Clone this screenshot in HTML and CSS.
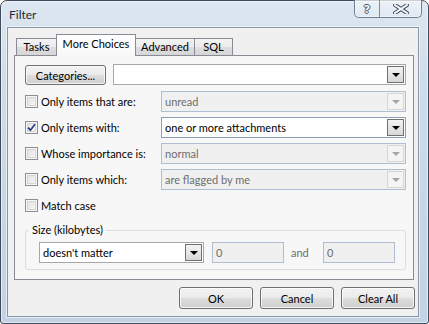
FILE: index.html
```html
<!DOCTYPE html>
<html>
<head>
<meta charset="utf-8">
<title>Filter</title>
<link rel="stylesheet" href="styles.css">
</head>
<body>
<div class="window">
  <div class="titlebar">
    <span class="title">Filter</span>
    <div class="caption-btns">
      <div class="cbtn help">?</div>
      <div class="cbtn close">
        <svg width="16" height="10" viewBox="0 0 16 10">
          <path d="M2 1 L14 9 M14 1 L2 9" stroke="#4b5566" stroke-width="4" stroke-linecap="square"/>
          <path d="M2 1 L14 9 M14 1 L2 9" stroke="#f4f7fa" stroke-width="2" stroke-linecap="square"/>
        </svg>
      </div>
    </div>
  </div>
  <div class="client">
    <div class="tabs">
      <div class="tab t-tasks">Tasks</div>
      <div class="tab t-more active">More Choices</div>
      <div class="tab t-adv">Advanced</div>
      <div class="tab t-sql">SQL</div>
    </div>
    <div class="panel">
      <div class="cat-row">
        <div class="btn cat">Categories...</div>
        <div class="combo wide"><span class="val"></span><span class="arrow"><i></i></span></div>
      </div>
      <div class="crit">
        <div class="chk"><span class="box"></span>Only items that are:</div>
        <div class="combo disabled"><span class="val">unread</span><span class="arrow"><i></i></span></div>
        <div class="chk"><span class="box checked"><svg width="9" height="9" viewBox="0 0 9 9"><path d="M1 4.6 L3.4 7.2 L8 1.2" fill="none" stroke="#2b3c8c" stroke-width="1.7"/></svg></span>Only items with:</div>
        <div class="combo active-list"><span class="val">one or more attachments</span><span class="arrow"><i></i></span></div>
        <div class="chk"><span class="box"></span>Whose importance is:</div>
        <div class="combo disabled"><span class="val">normal</span><span class="arrow"><i></i></span></div>
        <div class="chk"><span class="box"></span>Only items which:</div>
        <div class="combo disabled"><span class="val">are flagged by me</span><span class="arrow"><i></i></span></div>
      </div>
      <div class="chk match"><span class="box"></span>Match case</div>
      <fieldset class="group">
        <legend>Size (kilobytes)</legend>
        <div class="size-row">
          <div class="combo size"><span class="val">doesn't matter</span><span class="arrow"><i></i></span></div>
          <div class="field">0</div>
          <span class="and">and</span>
          <div class="field">0</div>
        </div>
      </fieldset>
    </div>
    <div class="actions">
      <div class="btn act">OK</div>
      <div class="btn act">Cancel</div>
      <div class="btn act">Clear All</div>
    </div>
  </div>
</div>
</body>
</html>
```
FILE: styles.css
```css
* { box-sizing: border-box; }
html, body { margin: 0; padding: 0; }
body {
  width: 429px;
  height: 324px;
  overflow: hidden;
  background: #ffffff;
  font-family: Lato, "Noto Sans", sans-serif;
  font-size: 11px;
  color: #000;
}

.window {
  width: 429px;
  height: 324px;
  border: 1px solid #3f4b5a;
  border-radius: 7px 7px 3px 3px;
  background: linear-gradient(180deg, #dde7f1 0%, #cfdcea 25%, #c8d7e7 60%, #c3d3e4 100%);
  box-shadow: inset 0 0 0 1px rgba(255,255,255,0.55);
  display: flex;
  flex-direction: column;
}

.titlebar {
  height: 26px;
  display: flex;
  justify-content: space-between;
  align-items: flex-start;
}
.title {
  padding: 6px 0 0 8px;
  line-height: 15px;
  font-size: 12px;
  color: #1e2a38;
}
.caption-btns {
  display: flex;
  margin-top: -1px;
  margin-right: 6px;
  height: 18px;
  border: 1px solid #6f7d8f;
  border-top: none;
  border-radius: 0 0 5px 5px;
  background: linear-gradient(180deg, rgba(255,255,255,0.45), rgba(255,255,255,0.15));
  box-shadow: inset 0 0 0 1px rgba(255,255,255,0.5);
  overflow: hidden;
}
.cbtn {
  display: flex;
  align-items: center;
  justify-content: center;
  height: 17px;
}
.help {
  width: 25px;
  border-right: 1px solid #7f8c9c;
  font-family: "DejaVu Sans", sans-serif;
  font-weight: bold;
  font-size: 11px;
  color: #f4f7fa;
  text-shadow: 1px 0 #4b5566, -1px 0 #4b5566, 0 1px #4b5566, 0 -1px #4b5566;
  padding-top: 1px;
}
.close {
  width: 41px;
}

.client {
  margin-left: 6px;
  width: 412px;
  height: 290px;
  border: 1px solid #8796a8;
  box-shadow: 0 0 0 1px rgba(255,255,255,0.55);
  background: #f0f0f0;
  padding: 6px 0 0 6px;
}

.tabs {
  display: flex;
  align-items: flex-end;
  height: 21px;
  padding-left: 2px;
}
.tab {
  height: 17px;
  margin-right: -1px;
  border: 1px solid #898c95;
  border-bottom: none;
  background: linear-gradient(180deg, #f3f3f3 0%, #ebebeb 50%, #dedede 51%, #d6d6d6 100%);
  line-height: 15px;
  text-align: center;
}
.tab.active {
  position: relative;
  z-index: 1;
  height: 22px;
  margin-bottom: -1px;
  padding-top: 1px;
  background: linear-gradient(180deg, #ffffff 0%, #f7f7f7 100%);
}
.t-tasks { width: 41px; }
.t-more { width: 80px; }
.t-adv { width: 60px; }
.t-sql { width: 39px; }

.panel {
  width: 400px;
  height: 225px;
  border: 1px solid #898c95;
  background: #f7f7f7;
  padding: 8px 7px 0 10px;
}

.cat-row {
  display: flex;
  height: 21px;
}
.btn {
  display: flex;
  align-items: center;
  justify-content: center;
  border: 1px solid #707070;
  border-radius: 3px;
  background: linear-gradient(180deg, #f2f2f2 0%, #ebebeb 48%, #dddddd 52%, #cfcfcf 100%);
  box-shadow: inset 0 0 0 1px rgba(255,255,255,0.75);
  line-height: 15px;
}
.btn.cat {
  width: 81px;
  height: 20px;
  margin-top: 1px;
}

.combo {
  display: flex;
  align-items: center;
  height: 21px;
  border: 1px solid #a7a7a7;
  background: #ffffff;
  padding: 1px;
}
.combo .val {
  flex: 1;
  padding-left: 2px;
  line-height: 15px;
  white-space: nowrap;
}
.combo .arrow {
  width: 17px;
  height: 17px;
  border: 1px solid #707070;
  background: linear-gradient(180deg, #f3f3f3 0%, #e6e6e6 50%, #d7d7d7 100%);
  display: flex;
  align-items: center;
  justify-content: center;
}
.combo .arrow i {
  width: 0;
  height: 0;
  border-left: 4px solid transparent;
  border-right: 4px solid transparent;
  border-top: 4px solid #000;
  margin-top: 1px;
}
.combo.wide {
  width: 293px;
  margin-left: 7px;
}
.combo.active-list {
  border-color: #8e9fb4;
}
.combo.disabled {
  border-color: #aebfd3;
  background: #f0f0f0;
}
.combo.disabled .val { color: #6d6d6d; }
.combo.disabled .arrow {
  border-color: #d6d6d6;
  background: #f4f4f4;
}
.combo.disabled .arrow i { border-top-color: #a5a5a5; }

.crit {
  display: grid;
  grid-template-columns: 136px 245px;
  grid-auto-rows: 21px;
  row-gap: 5px;
  align-items: center;
  margin-top: 6px;
}

.chk {
  display: flex;
  align-items: center;
  line-height: 15px;
  white-space: nowrap;
}
.box {
  width: 13px;
  height: 13px;
  margin-right: 3px;
  border: 1px solid #8f8f8f;
  background: linear-gradient(135deg, #dcdcdc 0%, #efefef 60%, #fbfbfb 100%);
  box-shadow: inset 0 0 0 1px #f6f6f6, inset 0 0 0 2px #d6d6d6;
  display: flex;
  align-items: center;
  justify-content: center;
  flex-shrink: 0;
}
.box.checked svg { display: block; }
.chk.match {
  margin-top: 9px;
  height: 13px;
}

.group {
  margin: 11px 0 0 0;
  width: 381px;
  border: 1px solid #d5dfe5;
  border-radius: 3px;
  padding: 0;
}
.group legend {
  margin-left: 3px;
  padding: 0 3px;
  line-height: 14px;
}
.size-row {
  display: flex;
  align-items: center;
  padding: 5px 0 6px 13px;
}
.combo.size {
  width: 165px;
  flex-shrink: 0;
}
.field {
  flex-shrink: 0;
  width: 72px;
  height: 21px;
  margin-left: 8px;
  border: 1px solid #aebfd3;
  background: #f0f0f0;
  color: #6d6d6d;
  padding-left: 3px;
  line-height: 19px;
}
.and {
  flex-shrink: 0;
  width: 39px;
  padding-left: 7px;
  color: #6d6d6d;
  margin-right: -8px;
}

.actions {
  display: flex;
  justify-content: flex-end;
  gap: 7px;
  margin-top: 7px;
  padding-right: 3px;
}
.btn.act {
  width: 74px;
  height: 22px;
}
```
